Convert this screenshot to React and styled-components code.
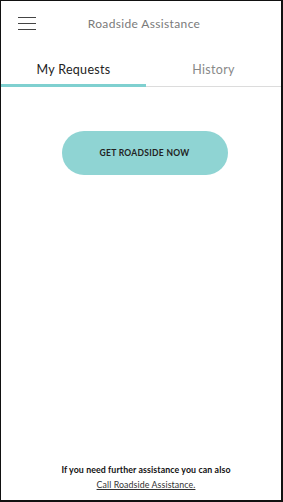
import React from "react";
import styled, { createGlobalStyle } from "styled-components";

const Global = createGlobalStyle`
  html, body { margin: 0; padding: 0; background: #fff; }
  body { font-family: Lato, "Open Sans", sans-serif; }
  * { box-sizing: border-box; }
`;

const Frame = styled.div`
  width: 283px;
  height: 502px;
  border-top: 1px solid #111;
  border-left: 1px solid #111;
  border-right: 2px solid #111;
  border-bottom: 2px solid #111;
  display: flex;
  flex-direction: column;
  background: #fff;
`;

const Header = styled.header`
  height: 45px;
  display: grid;
  grid-template-columns: 40px 1fr 40px;
  align-items: center;
`;

const Burger = styled.div`
  display: flex;
  flex-direction: column;
  gap: 4.5px;
  margin-left: 17px;
  width: 18px;
  & > span {
    display: block;
    height: 1.5px;
    background: #444;
  }
`;

const Title = styled.div`
  text-align: center;
  font-size: 12px;
  color: #7a7a7a;
  letter-spacing: 0.35px;
  margin-left: 6px;
`;

const Tabs = styled.nav`
  display: grid;
  grid-template-columns: 145px 1fr;
  margin-top: 16px;
  border-bottom: 1px solid #dcdcdc;
`;

const Tab = styled.div`
  text-align: center;
  font-size: 12.5px;
  padding-bottom: 7px;
  color: ${(p) => (p.$active ? "#222" : "#888")};
  border-bottom: 3px solid ${(p) => (p.$active ? "#7fd0d0" : "transparent")};
  margin-bottom: -1px;
  letter-spacing: 0.3px;
`;

const Body = styled.main`
  flex: 1;
  display: flex;
  flex-direction: column;
  align-items: center;
  padding-top: 44px;
`;

const CTA = styled.button`
  width: 166px;
  height: 44px;
  border: none;
  border-radius: 22px;
  background: #8fd4d3;
  color: #222;
  font-family: Lato, sans-serif;
  font-weight: 700;
  font-size: 8.5px;
  letter-spacing: 0.3px;
  margin-left: 7px;
`;

const Footer = styled.footer`
  text-align: center;
  padding-bottom: 8px;
  font-size: 8.8px;
  line-height: 15px;
  margin-left: 10px;
`;

const Note = styled.div`
  font-weight: 700;
  color: #111;
  letter-spacing: 0.1px;
`;

const Link = styled.a`
  color: #333;
  text-decoration: underline;
  letter-spacing: 0.1px;
`;

export default function App() {
  return (
    <>
      <Global />
      <Frame>
        <Header>
          <Burger>
            <span />
            <span />
            <span />
          </Burger>
          <Title>Roadside Assistance</Title>
          <div />
        </Header>
        <Tabs>
          <Tab $active>My Requests</Tab>
          <Tab>History</Tab>
        </Tabs>
        <Body>
          <CTA>GET ROADSIDE NOW</CTA>
        </Body>
        <Footer>
          <Note>If you need further assistance you can also</Note>
          <Link href="#">Call Roadside Assistance.</Link>
        </Footer>
      </Frame>
    </>
  );
}
